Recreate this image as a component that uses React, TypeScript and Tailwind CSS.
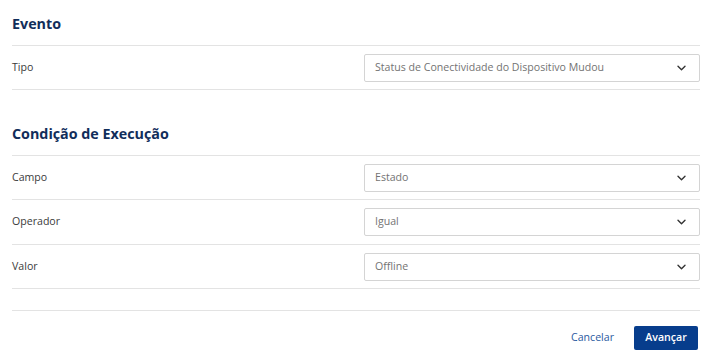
import React from 'react';

const font = { fontFamily: '"Open Sans", "Liberation Sans", sans-serif' };

const Chevron: React.FC = () => (
    <svg width="9" height="6" viewBox="0 0 9 6" fill="none" className="shrink-0">
        <path d="M1 1.2l3.5 3.5 3.5-3.5" stroke="#333" strokeWidth="1.4" strokeLinecap="round" strokeLinejoin="round" />
    </svg>
);

interface RowProps {
    label: string;
    value: string;
    tall?: boolean;
}

const Row: React.FC<RowProps> = ({ label, value, tall }) => (
    <div className={`${tall ? 'h-[45px]' : 'h-[44px]'} flex items-center border-b border-[#e3e3e3]`}>
        <div className="w-[352px] text-[10.6px] text-[#3a3a3a]">{label}</div>
        <div className="flex-1 h-[28px] border border-[#d4d4d4] rounded-[2px] flex items-center justify-between pl-[10px] pr-[13px]">
            <span className="text-[10.6px] text-[#737373]">{value}</span>
            <Chevron />
        </div>
    </div>
);

const Heading: React.FC<{ children: React.ReactNode }> = ({ children }) => (
    <div className="h-[46px] pt-[14px] border-b border-[#e3e3e3]">
        <h3 className="text-[14.3px] leading-[20px] font-bold text-[#112d5a]">{children}</h3>
    </div>
);

export default function App() {
    return (
        <div className="w-[715px] h-[364px] bg-white pl-[12px] pr-[15px]" style={font}>
            <Heading>Evento</Heading>
            <Row label="Tipo" value="Status de Conectividade do Dispositivo Mudou" />

            <div className="mt-[20px]">
                <Heading>Condição de Execução</Heading>
                <Row label="Campo" value="Estado" />
                <Row label="Operador" value="Igual" tall />
                <Row label="Valor" value="Offline" />
            </div>

            <div className="mt-[21px] border-t border-[#e3e3e3] pt-[15px] flex justify-end items-center gap-[20px] pr-[2px]">
                <button className="text-[10.6px] text-[#2a5aa0]">Cancelar</button>
                <button className="h-[24px] w-[64px] bg-[#073d8c] text-white text-[10.6px] font-semibold rounded-[2px]">Avançar</button>
            </div>
        </div>
    );
}
